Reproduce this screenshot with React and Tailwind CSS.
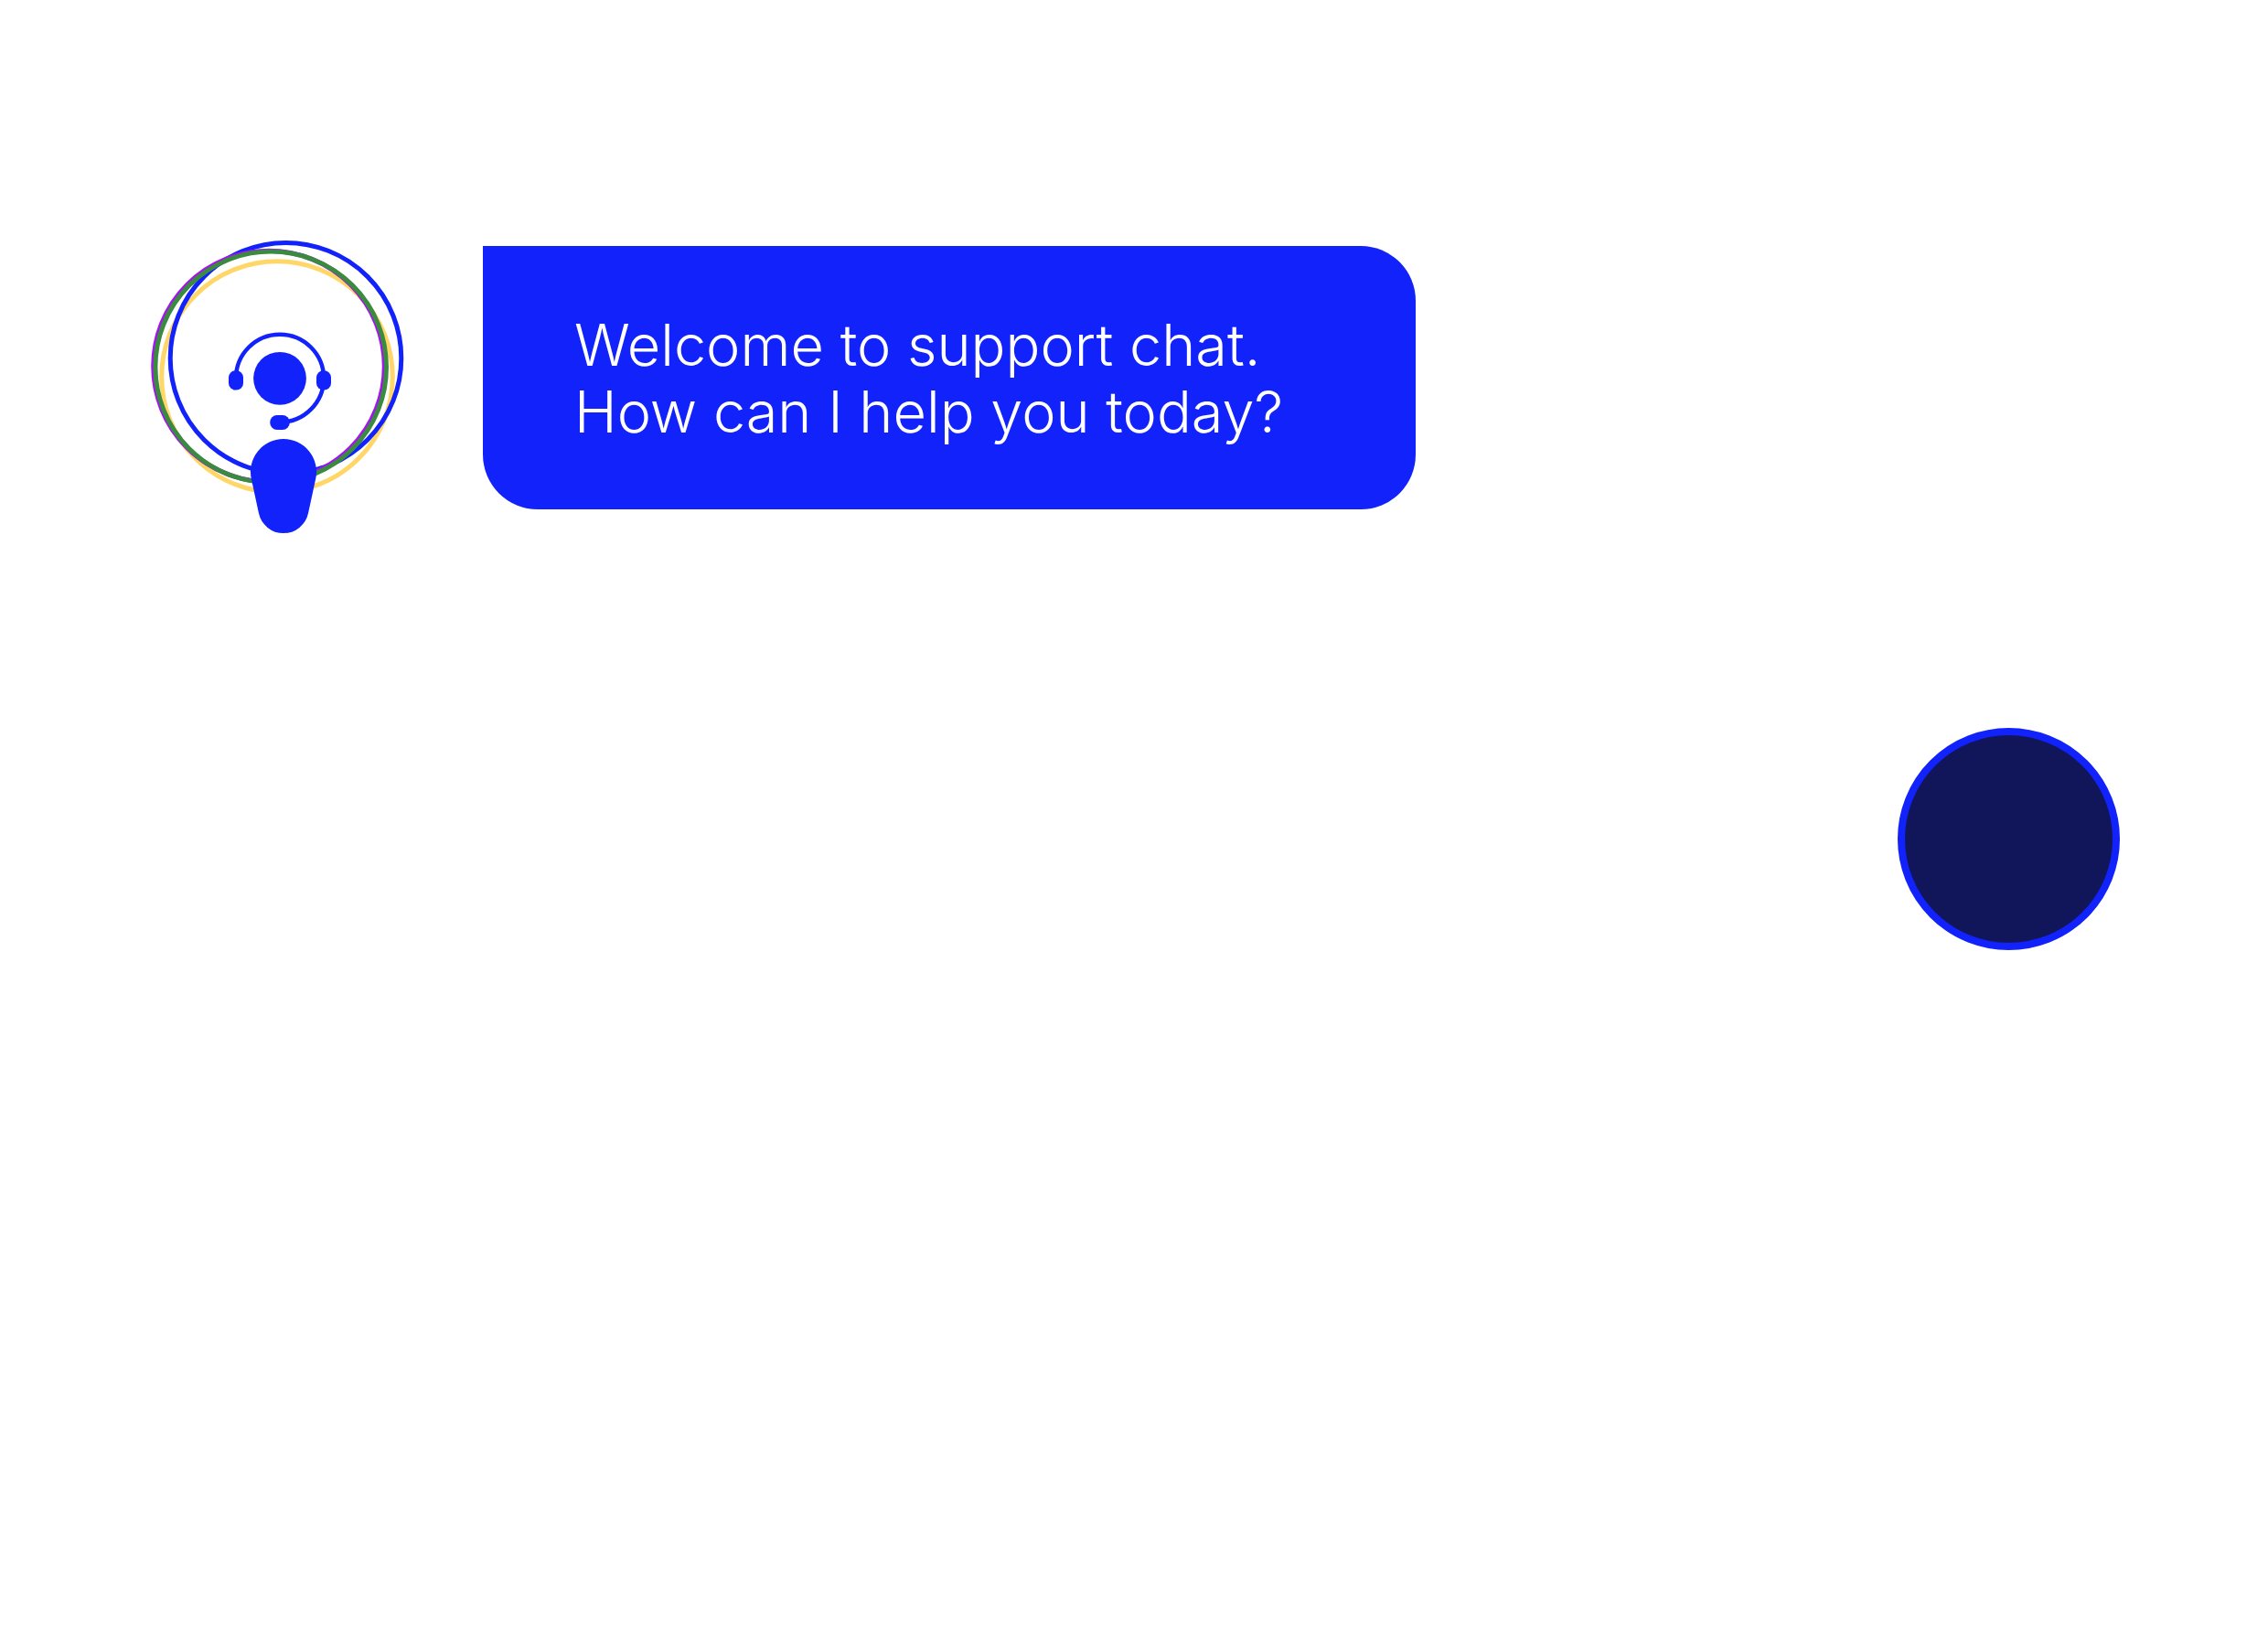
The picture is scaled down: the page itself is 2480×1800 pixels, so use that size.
function AgentAvatar() {
  return (
    <svg
      viewBox="162 262 280 322"
      className="w-[280px] shrink-0"
      role="img"
      aria-label="Support agent"
      fill="none"
    >
      <g strokeWidth="5">
        <circle cx="303" cy="412" r="126.3" stroke="#ffd768" />
        <circle cx="312.5" cy="391.7" r="126.3" stroke="#1122fb" />
        <circle cx="294" cy="400.5" r="126.3" stroke="#a514ef" />
        <circle cx="296.2" cy="401.4" r="126.3" stroke="#3a8a3f" />
      </g>
      <path
        d="M258 413.7a48 48 0 0 1 96 0a48 48 0 0 1-48 48"
        stroke="#1122fb"
        strokeWidth="4.5"
      />
      <g fill="#1122fb">
        <circle cx="306" cy="413.8" r="28.9" />
        <rect x="250" y="405.2" width="16" height="21.4" rx="7.6" />
        <rect x="346" y="405.2" width="16" height="21.4" rx="7.6" />
        <rect x="295.3" y="454" width="21.4" height="16" rx="7.6" />
        <path d="M274.8 523.6A36 36 0 1 1 345.2 523.6L337.1 561.1A27.7 27.7 0 0 1 282.9 561.1Z" />
      </g>
    </svg>
  );
}

function Bubble({ children }) {
  return (
    <div className="mt-[7px] max-w-[1020px] flex-1 rounded-[60px] rounded-tl-none bg-[#1122fb] px-[100px] pt-[72px] pb-[70px]">
      <p className="font-['Inter',sans-serif] text-[63px] leading-[73px] font-light text-white">
        {children}
      </p>
    </div>
  );
}

export default function App() {
  return (
    <main className="flex min-h-screen flex-col gap-[212px] bg-white px-[162px] pt-[262px] pb-16">
      <section className="flex items-start gap-[86px]">
        <AgentAvatar />
        <Bubble>
          Welcome to support chat.
          <br />
          How can I help you today?
        </Bubble>
      </section>
      <section className="flex justify-end">
        <div
          role="img"
          aria-label="You"
          className="size-[243px] rounded-full border-8 border-[#1122fb] bg-[#11165a]"
        />
      </section>
    </main>
  );
}
